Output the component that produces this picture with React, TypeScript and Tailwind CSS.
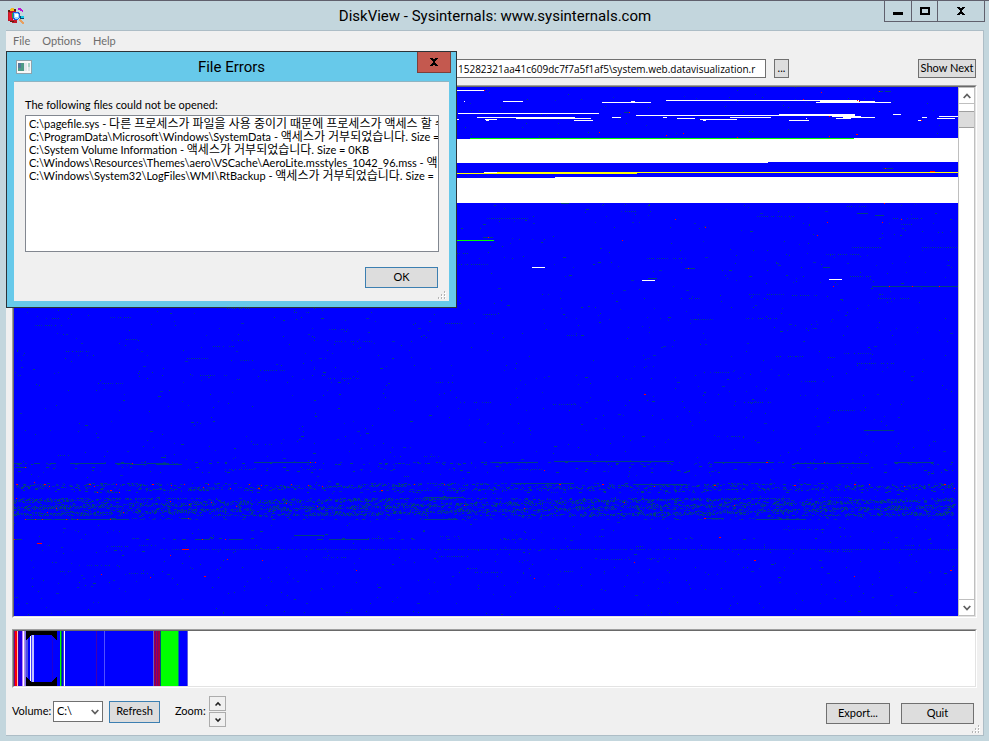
import React from "react";

type Run = [x: number, y: number, w: number];

const MAP_W = 944;
const MAP_H = 529;

const toPath = (runs: Run[]) => runs.map(([x, y, w]) => `M${x} ${y}h${w}v1h-${w}z`).join("");

// Small deterministic generator so the cluster map is the same on each load
function createRandom(seed: number) {
  let s = seed;
  return () => {
    s = (s * 1664525 + 1013904223) >>> 0;
    return s / 4294967296;
  };
}

const FREE: Run[] = [
  [443, 3, 27], [450, 14, 1], [489, 14, 20], [588, 15, 49], [617, 14, 4], [652, 13, 193],
  [444, 26, 141], [622, 28, 219], [463, 30, 98], [502, 31, 75], [598, 30, 9], [471, 32, 12],
  [443, 32, 2], [472, 33, 3], [560, 33, 19], [649, 30, 4], [663, 31, 18], [686, 32, 37],
  [689, 33, 3], [716, 30, 41], [806, 14, 55], [802, 15, 75], [765, 27, 76], [818, 29, 29],
  [829, 30, 32], [822, 31, 15], [879, 27, 8], [775, 33, 20], [792, 31, 1], [908, 30, 5],
  [904, 33, 3], [925, 29, 19], [923, 31, 18], [470, 85, 13], [518, 180, 13], [628, 193, 13],
  [815, 192, 13],
];

const SMALL_FILES: Run[] = [
  [858, 199, 86], [843, 126, 11], [861, 128, 9], [809, 180, 7], [634, 191, 9], [671, 181, 10],
  [469, 150, 10], [610, 25, 6], [869, 81, 10], [864, 4, 5], [871, 4, 6], [547, 116, 8],
  [56, 376, 36], [101, 376, 18], [133, 376, 22], [36, 376, 6], [20, 376, 6], [0, 376, 8],
  [116, 377, 17], [142, 377, 26], [248, 375, 31], [284, 375, 12], [1, 380, 12], [147, 370, 5],
  [12, 432, 26], [40, 432, 15], [57, 432, 17], [75, 432, 40], [96, 431, 6], [167, 431, 10],
  [0, 452, 8], [168, 452, 4], [181, 452, 15], [215, 452, 14], [303, 452, 6], [315, 452, 40],
  [240, 375, 60], [410, 432, 34], [478, 375, 46], [540, 374, 120], [700, 375, 60],
  [780, 376, 75], [880, 375, 40], [500, 396, 60], [620, 397, 50], [742, 432, 50],
  [410, 410, 40], [690, 431, 20], [850, 343, 30], [280, 448, 30],
];

const SYSTEM: Run[] = [
  [11, 380, 1], [118, 376, 1], [296, 375, 1], [301, 375, 1], [2, 397, 2], [20, 395, 1],
  [30, 397, 2], [75, 397, 2], [80, 399, 1], [102, 397, 1], [96, 403, 2], [35, 399, 1],
  [83, 405, 1], [105, 405, 1], [138, 397, 2], [170, 397, 1], [157, 398, 1], [189, 400, 1],
  [194, 397, 1], [216, 401, 1], [235, 397, 1], [247, 398, 1], [244, 401, 2], [277, 397, 1],
  [294, 398, 1], [308, 399, 1], [2, 411, 1], [42, 421, 1], [33, 425, 1], [109, 425, 1],
  [156, 414, 1], [175, 417, 1], [222, 419, 1], [197, 415, 1], [272, 416, 1], [303, 419, 1],
  [11, 432, 1], [21, 432, 1], [28, 432, 1], [52, 432, 1], [63, 432, 1], [96, 432, 1],
  [174, 431, 1], [0, 452, 1], [188, 452, 1], [211, 452, 1], [23, 456, 5], [168, 462, 7],
  [156, 468, 1], [213, 472, 1], [248, 473, 1], [87, 487, 1], [136, 490, 1], [190, 489, 2],
  [474, 150, 1], [608, 153, 1], [661, 132, 1], [691, 140, 1], [674, 181, 1], [470, 3, 1],
  [585, 45, 1], [652, 48, 1], [669, 46, 1], [723, 50, 1], [615, 25, 1], [807, 5, 1],
  [865, 4, 1], [843, 13, 1], [845, 14, 1], [789, 12, 1], [815, 29, 1], [842, 47, 2],
  [815, 49, 1], [907, 33, 1], [871, 81, 1], [916, 84, 5], [870, 116, 1], [813, 135, 1],
  [868, 135, 1], [887, 132, 1], [803, 148, 1], [819, 199, 1], [875, 199, 1], [898, 199, 1],
  [925, 199, 1], [630, 307, 2], [530, 383, 1], [545, 397, 2], [588, 397, 2], [640, 399, 1],
  [700, 398, 2], [752, 375, 2], [780, 398, 2], [810, 375, 1], [840, 397, 2], [890, 399, 1],
  [930, 397, 2], [940, 401, 1], [855, 397, 1], [400, 397, 1], [367, 403, 2], [430, 397, 1],
  [450, 418, 1], [510, 421, 1], [610, 415, 1], [720, 418, 1], [690, 431, 2], [705, 450, 2],
  [740, 473, 2], [936, 483, 2], [342, 483, 1], [620, 475, 1], [840, 489, 1], [520, 491, 1],
];

function scatter(): { dark: string; dim: string } {
  const rnd = createRandom(2047);
  const dark: Run[] = [];
  const dim: Run[] = [];
  const put = (x: number, y: number, w: number) => (rnd() < 0.55 ? dark : dim).push([x, y, w]);

  for (let i = 0; i < 60; i++) put(Math.floor(443 + rnd() * 500), Math.floor(rnd() * 50), 1);
  // Loose specks over the used area
  for (let i = 0; i < 1500; i++) {
    const y = Math.floor(117 + rnd() * 411);
    put(Math.floor(rnd() * (MAP_W - 3)), y, rnd() < 0.82 ? 1 : 2 + Math.floor(rnd() * 2));
  }
  // Short dotted rows
  for (let i = 0; i < 110; i++) {
    const x = Math.floor(rnd() * 890);
    const y = Math.floor(118 + rnd() * 370);
    const n = 4 + Math.floor(rnd() * 16);
    for (let k = 0; k < n; k++) if (rnd() < 0.7) put(x + k * 2, y, 1);
  }
  // Fragmented bands
  const band = (y0: number, y1: number, density: number) => {
    for (let y = y0; y <= y1; y++) {
      let x = 0;
      while (x < MAP_W - 4) {
        const wave = 0.65 + 0.45 * Math.sin(x / 47 + y * 0.9);
        const w = 1 + Math.floor(rnd() * 3);
        if (rnd() < density * wave) put(x, y, w);
        x += w + 1;
      }
    }
  };
  band(375, 377, 0.22);
  band(379, 385, 0.06);
  band(396, 403, 0.46);
  band(404, 405, 0.14);
  band(411, 428, 0.68);
  band(429, 431, 0.1);
  band(432, 432, 0.3);
  band(451, 452, 0.07);
  for (let x = 146; x < MAP_W; x += 2) if (rnd() < 0.8) put(x, 462, 1);
  for (let x = 838; x < 868; x += 2) put(x, 160, 1);
  for (let x = 908; x < 944; x += 2) put(x, 160, 1);
  for (let x = 473; x < 515; x += 2) put(x, 131, 1);

  return { dark: toPath(dark), dim: toPath(dim) };
}

const specks = scatter();

function ClusterMap() {
  return (
    <svg
      className="block h-full min-w-0 flex-1 bg-[#0000ff]"
      viewBox={`0 0 ${MAP_W} ${MAP_H}`}
      preserveAspectRatio="none"
      shapeRendering="crispEdges"
      role="img"
      aria-label="Cluster map"
    >
      <path fill="#004080" d={specks.dark} />
      <path fill="#002cae" d={specks.dim} />
      <path fill="#004080" d={toPath(SMALL_FILES)} />
      <path fill="#fff" d={toPath(FREE)} />
      <path fill="#fff" d="M0 52H840V51H944V75H754V76H0zM0 91H541V90H944V116H0z" />
      <path fill="#00ff00" d="M456 51h384v1h-384zM443 153h37v1h-37z" />
      <path fill="#ffff00" d="M443 86h40v1h-40zM483 85h140v2h-140zM623 85h321v1h-321z" />
      <path fill="#ff0000" d={toPath(SYSTEM)} />
    </svg>
  );
}

// Colour columns of the volume overview: start, width, colour
const STRIPES: [number, number, string][] = [
  [0, 1, "#800080"], [1, 2, "#ff0000"], [3, 1, "#ffc0c0"], [4, 1, "#4000a0"], [5, 3, "#2000e0"],
  [8, 1, "#c080ff"], [9, 1, "#ffffff"], [10, 1, "#b090e0"], [11, 1, "#8070ff"],
  [12, 2, "#5050e0"], [16, 1, "#ffffff"], [17, 1, "#4040ff"], [18, 2, "#c0c0ff"],
  [38, 1, "#2000d0"], [46, 1, "#00ff00"], [47, 1, "#006060"], [49, 1, "#4040c0"],
  [50, 1, "#ffffff"], [82, 1, "#4000b0"], [90, 1, "#5050ff"], [139, 1, "#6060d0"],
  [140, 1, "#a00040"], [141, 1, "#600090"], [142, 1, "#b00040"], [143, 1, "#700080"],
  [144, 2, "#a00040"], [146, 1, "#005080"], [147, 17, "#00ff00"], [164, 1, "#008080"],
  [173, 1, "#6060e0"],
];

function VolumeOverview() {
  return (
    <svg className="block h-full w-[174px]" viewBox="0 0 174 55" preserveAspectRatio="none" shapeRendering="crispEdges" role="img" aria-label="Volume overview">
      <rect width="174" height="55" fill="#0000ff" />
      {STRIPES.map(([x, w, c]) => (
        <rect key={x} x={x} width={w} height="55" fill={c} />
      ))}
      <path fill="#000" d="M12 0h31v9h-1v-1h-1v-1h-1v-1h-1v-1h-1v-1H17v1h-1v1h-1v1h-1v1h-1v1h-1zM12 55h31v-9h-1v1h-1v1h-1v1h-1v1h-1v1H17v-1h-1v-1h-1v-1h-1v-1h-1v-1h-1z" />
    </svg>
  );
}

function Chevron({ up = false, small = false }: { up?: boolean; small?: boolean }) {
  return (
    <svg className={small ? "size-[6px]" : "size-2"} viewBox="0 0 8 8" fill="none" stroke={small ? "#202020" : "#606060"} strokeWidth={small ? 2 : 1.8} aria-hidden="true">
      <path d={up ? "M.7 6 4 2.5 7.3 6" : "M.7 2 4 5.5 7.3 2"} />
    </svg>
  );
}

function SizeGrip() {
  return (
    <svg className="block size-2" viewBox="0 0 8 8" shapeRendering="crispEdges" aria-hidden="true">
      <path fill="#fff" d="M7 1h1v2H6V2h1zM4 4h1v2H3V5h1zM7 4h1v2H6V5h1zM1 7h1v1H0zM4 7h1v1H3zM7 7h1v1H6z" />
      <path fill="#b4b4b4" d="M6 0h1v2H6zM3 3h1v2H3zM6 3h1v2H6zM0 6h1v2H0zM3 6h1v2H3zM6 6h1v2H6z" />
    </svg>
  );
}

function AppIcon() {
  return (
    <svg className="block size-4" viewBox="0 0 16 16" shapeRendering="crispEdges" aria-hidden="true">
      <path fill="#c01828" d="M0 3h2V1h6v3H5v8h4v3H4v-1H2v-1H0z" />
      <path fill="#e81c2c" d="M1 5h3v7H1z" />
      <path fill="#f0c020" d="M3 0h3v2h2v1H2V1h1z" />
      <path fill="#5c2010" d="M0 2h2v2H0zM6 1h2v2H6zM2 13h4v1H2z" />
      <path fill="#20b040" d="M4 5h2v5H4z" />
      <path fill="#2060e0" d="M5 4h6v1h1v5h-1v1h-1v1H6v-1H5z" />
      <path fill="#98e0f8" d="M6 5h4v1h1v4h-1v1H7v-1H6z" />
      <path fill="#fff" d="M7 6h3v3H7z" />
      <path fill="#c010d0" d="M10 0h3v1h1v1h1v2h-1V3h-2V2h-2z" />
      <path fill="#004870" d="M12 8h4v3h-4z" />
      <path fill="#10c8e8" d="M13 8h3v2h-3z" />
      <path fill="#e8a060" d="M11 11h2v1h1v1h1v1h1v2h-2v-1h-1v-1h-1v-1h-1z" />
    </svg>
  );
}

function DialogIcon() {
  return (
    <svg className="block h-[14px] w-4" viewBox="0 0 16 14" shapeRendering="crispEdges" aria-hidden="true">
      <rect width="16" height="14" fill="#8da3ad" />
      <rect x="1" y="1" width="14" height="12" fill="#f8f8f8" />
      <rect x="2" y="3" width="6" height="8" fill="#4d9a86" />
      <rect x="2" y="3" width="3" height="5" fill="#52799a" />
      <rect x="8" y="3" width="3" height="8" fill="#e4e8ec" />
      <rect x="12" y="3" width="2" height="4" fill="#a9d3c6" />
      <rect x="12" y="7" width="2" height="4" fill="#dbe4e6" />
    </svg>
  );
}

const CloseGlyph = () => (
  <svg className="block h-[8px] w-[10px]" viewBox="0 0 10 8" shapeRendering="crispEdges" aria-hidden="true">
    <path fill="#000" d="M1 0h3v1h2V0h3v1H8v1H7v1H6v2h1v1h1v1h1v1H6V7H4v1H1V7h1V6h1V5h1V3H3V2H2V1H1z" />
  </svg>
);

const buttonBase = "flex items-center justify-center border bg-[#dddddd] whitespace-nowrap";
const titleText = "text-center font-[Roboto,sans-serif] text-[15px] leading-5";

const ERRORS: { path: string; message: string; size: string }[] = [
  { path: "C:\\pagefile.sys", message: "다른 프로세스가 파일을 사용 중이기 때문에 프로세스가 액세스 할 수", size: "" },
  { path: "C:\\ProgramData\\Microsoft\\Windows\\SystemData", message: "액세스가 거부되었습니다.", size: "Size =" },
  { path: "C:\\System Volume Information", message: "액세스가 거부되었습니다.", size: "Size = 0KB" },
  { path: "C:\\Windows\\Resources\\Themes\\aero\\VSCache\\AeroLite.msstyles_1042_96.mss", message: "액", size: "" },
  { path: "C:\\Windows\\System32\\LogFiles\\WMI\\RtBackup", message: "액세스가 거부되었습니다.", size: "Size =" },
];

function FileErrorsDialog() {
  return (
    <section
      role="dialog"
      aria-labelledby="errors-title"
      className="absolute top-[50px] left-[6px] flex h-[257px] w-[451px] flex-col border border-[#2b3338] bg-[#67c9ea] px-[7px] pb-[6px]"
    >
      <header className="grid h-[29px] shrink-0 grid-cols-[40px_1fr_40px] items-center">
        <span className="pl-[2px]"><DialogIcon /></span>
        <h2 id="errors-title" className={titleText}>File Errors</h2>
        <button type="button" aria-label="Close dialog" className="-mr-[2px] flex h-[21px] w-[34px] items-center justify-center self-start justify-self-end border border-t-0 border-[#7c3f3a] bg-[#c4594f]">
          <CloseGlyph />
        </button>
      </header>
      <div className="flex min-h-0 flex-1 flex-col border-t border-[#8fb4c2] bg-[#f0f0f0] pt-4">
        <p className="px-[11px] leading-[13px]">The following files could not be opened:</p>
        <ul className="mx-[11px] mt-1 mr-[10px] h-[137px] overflow-hidden border border-[#828790] bg-white py-px pl-[3px]">
          {ERRORS.map((e) => (
            <li key={e.path} className="h-[13px] overflow-hidden leading-[13px] whitespace-pre">
              {e.path} - <span className="text-xs leading-[13px]">{e.message}</span>
              {e.size && " " + e.size}
            </li>
          ))}
        </ul>
        <div className="mt-[15px] flex justify-end pr-[11px]">
          <button type="button" className={`${buttonBase} h-[21px] w-[73px] border-[#3c7fb1]`}>OK</button>
        </div>
        <div className="mt-auto flex justify-end pr-[3px] pb-[2px]"><SizeGrip /></div>
      </div>
    </section>
  );
}

export default function App() {
  return (
    <div className="relative flex h-screen flex-col overflow-hidden border-t border-[#60606c] bg-[#c3d6dd] pr-[5px] pb-[5px] pl-[6px] font-[Lato,'Noto_Sans_CJK_KR',sans-serif] text-[11px] text-black">
      <header className="grid h-[29px] shrink-0 grid-cols-[100px_1fr_100px]">
        <span className="self-center pl-[2px]"><AppIcon /></span>
        <h1 className={`${titleText} self-center`}>
          DiskView - Sysinternals: www.sysinternals.com
        </h1>
        <div className="-mr-px flex h-[21px] divide-x divide-[#60606c] border border-t-0 border-[#60606c]">
          <button type="button" aria-label="Minimize" className="flex flex-1 items-center justify-center">
            <span className="mt-1 h-[3px] w-[10px] bg-black" />
          </button>
          <button type="button" aria-label="Maximize" className="flex w-[26px] items-center justify-center">
            <span className="h-2 w-[10px] border-2 border-black" />
          </button>
          <button type="button" aria-label="Close" className="flex w-[46px] items-center justify-center">
            <CloseGlyph />
          </button>
        </div>
      </header>

      <main className="flex min-h-0 flex-1 flex-col border-t border-r border-b border-[#adbdc6] bg-[#f0f0f0] px-[6px]">
        <nav className="flex h-5 shrink-0 items-center gap-3 text-[#6d6d6d]">
          <button type="button" className="pl-px">File</button>
          <button type="button">Options</button>
          <button type="button">Help</button>
        </nav>

        <div className="flex h-[34px] shrink-0 items-start pt-2 pr-px">
          <input
            type="text"
            aria-label="Highlighted file"
            readOnly
            value="15282321aa41c609dc7f7a5f1af5\system.web.datavisualization.r"
            className="ml-[400px] h-[19px] min-w-0 flex-1 border border-[#707070] bg-white pr-px pl-[45px] font-['Open_Sans',sans-serif] text-[10px]"
          />
          <button type="button" className={`${buttonBase} ml-2 h-[19px] w-[15px] border-[#707070]`}>...</button>
          <button type="button" className={`${buttonBase} ml-[129px] h-[19px] w-[58px] border-[#707070]`}>Show Next</button>
        </div>

        <div className="flex min-h-0 flex-1 border border-t-[#a0a0a0] border-r-white border-b-white border-l-[#a0a0a0]">
          <div className="flex min-w-0 flex-1 border border-t-[#696969] border-r-[#e3e3e3] border-b-[#e3e3e3] border-l-[#696969]">
            <ClusterMap />
            <div className="flex w-[17px] shrink-0 flex-col border-x border-[#bfbfbf] bg-white">
              <button type="button" aria-label="Scroll up" className="flex h-[17px] items-center justify-center border-y border-[#bfbfbf]"><Chevron up /></button>
              <div className="mt-[7px] h-[17px] border-y border-[#a0a0a0] bg-[#dcdcdc]" />
              <button type="button" aria-label="Scroll down" className="mt-auto flex h-[17px] items-center justify-center border-y border-[#bfbfbf]"><Chevron /></button>
            </div>
          </div>
        </div>

        <div className="mt-[11px] h-[59px] shrink-0 border border-t-[#a0a0a0] border-r-white border-b-white border-l-[#a0a0a0]">
          <div className="h-full border border-t-[#696969] border-r-[#e3e3e3] border-b-[#e3e3e3] border-l-[#696969] bg-white">
            <VolumeOverview />
          </div>
        </div>

        <footer className="flex h-[47px] shrink-0 items-center">
          <label htmlFor="volume" className="w-[41px]">Volume:</label>
          <div className="relative h-[21px] w-[50px]">
            <select id="volume" className="h-full w-full appearance-none border border-[#707070] bg-white pl-[3px]">
              <option>C:\</option>
            </select>
            <span className="pointer-events-none absolute top-[7px] right-1"><Chevron /></span>
          </div>
          <button type="button" className={`${buttonBase} ml-[6px] h-[22px] w-[51px] border-[#3c7fb1]`}>Refresh</button>
          <span id="zoom-label" className="ml-[15px] w-[34px]">Zoom:</span>
          <div role="group" aria-labelledby="zoom-label" className="flex flex-col gap-px">
            <button type="button" aria-label="Zoom in" className="flex h-[15px] w-[17px] items-center justify-center border border-[#acacac]"><Chevron up small /></button>
            <button type="button" aria-label="Zoom out" className="flex h-[15px] w-[17px] items-center justify-center border border-[#acacac]"><Chevron small /></button>
          </div>
          <button type="button" className={`${buttonBase} mt-1 ml-auto h-[21px] w-[64px] border-[#707070]`}>Export...</button>
          <button type="button" className={`${buttonBase} mt-1 ml-[11px] h-[21px] w-[73px] border-[#707070]`}>Quit</button>
          <span className="-mr-[3px] mb-[2px] -ml-[2px] self-end"><SizeGrip /></span>
        </footer>
      </main>

      <FileErrorsDialog />
    </div>
  );
}
